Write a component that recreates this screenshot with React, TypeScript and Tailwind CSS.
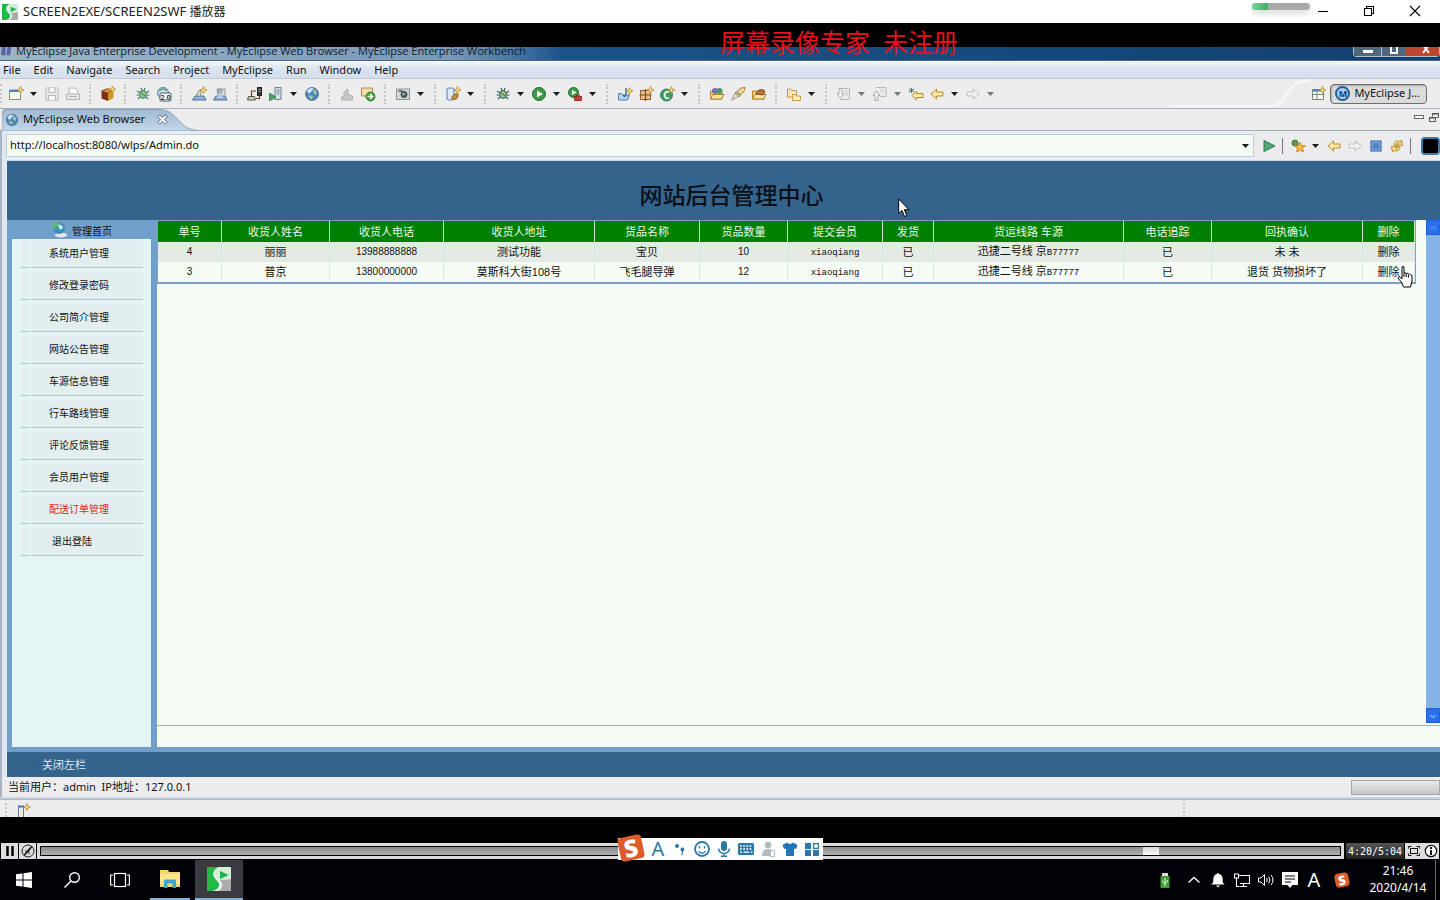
import React from "react";

type Kids = { children?: React.ReactNode };

function Svg({ children, s = 16, box = "0 0 16 16" }: Kids & { s?: number; box?: string }) {
  return (
    <svg width={s} height={s} viewBox={box} fill="none" aria-hidden="true" className="shrink-0">
      {children}
    </svg>
  );
}

const Spark = ({ x = 12, y = 4 }: { x?: number; y?: number }) => (
  <path
    transform={`translate(${x} ${y})`}
    d="M0-3.5 1-1 3.5 0 1 1 0 3.5-1 1-3.5 0-1-1Z"
    fill="#f7dc83"
    stroke="#b98a2a"
    strokeWidth=".8"
  />
);

const Globe = () => (
  <>
    <circle cx="8" cy="8" r="6.500" fill="#4d86bd" stroke="#42607f" strokeWidth=".7" />
    <path d="M3 5C5 1.500 9 1.500 9.500 3L7 6 5 8Z" fill="#cfe8f5" />
    <path d="M10 3l3 3-1 3-3-2ZM5 9l4 1-1 3.500-3-1.500Z" fill="#9fc9a6" />
  </>
);

const Bug = ({ c = "#3f7f86" }: { c?: string }) => (
  <>
    <path d="M2 5l3 2M1.500 9H5M3 13l3-3M14 5l-3 2M14.500 9H11M13 13l-3-3M6 2l1 3M10 2 9 5" stroke={c} strokeWidth="1.200" />
    <ellipse cx="8" cy="8.500" rx="3.400" ry="4" fill="#9cc66b" stroke={c} />
    <path d="M6 7l4 3" stroke={c} />
  </>
);

const LeftArrow = ({ c = "#b98a2a", f = "#fbe9a6" }: { c?: string; f?: string }) => (
  <path d="M2 8 7.500 3v3H14v4H7.500v3Z" fill={f} stroke={c} strokeLinejoin="round" />
);
const RightArrow = ({ c = "#bdbdbd", f = "#f4f4f4" }: { c?: string; f?: string }) => (
  <path d="M14 8 8.500 3v3H2v4h6.500v3Z" fill={f} stroke={c} strokeLinejoin="round" />
);

const Folder = ({ c = "#b5812e" }: { c?: string }) => (
  <>
    <path d="M1.500 13V5h4l1 1.500H13V13Z" fill="#f3cf7c" stroke={c} />
    <path d="M1.500 13 4 8.500h11L12.500 13Z" fill="#fbe4a4" stroke={c} />
  </>
);

const icons: Record<string, React.ReactNode> = {
  New: (
    <>
      <rect x="1.500" y="4" width="11" height="9.500" fill="#fffdf0" stroke="#8c8f75" />
      <path d="M1.500 5h10" stroke="#4d86bd" strokeWidth="2" />
      <Spark x={12.500} y={4} />
    </>
  ),
  Save: (
    <>
      <path d="M2 2h12v12H2Z" fill="#ececec" stroke="#b3b3b3" />
      <path d="M5 2v4.500h6V2M4.500 14V9.500h7V14" fill="#f8f8f8" stroke="#b3b3b3" />
    </>
  ),
  Print: (
    <>
      <path d="M4 8V2h6l3 2.500V8" fill="#f8f8f8" stroke="#b3b3b3" />
      <path d="M1.500 8h13v5.500h-13Z" fill="#e6e6e6" stroke="#b3b3b3" />
      <path d="M4 10.500h8" stroke="#b3b3b3" />
    </>
  ),
  Package: (
    <>
      <path d="M1.500 5l6-2.500L13.500 5l-5.500 2Z" fill="#d98f3a" stroke="#6d3a16" strokeWidth=".7" />
      <path d="M1.500 5 8 7v8l-6.500-2.500Z" fill="#7d2f1d" />
      <path d="M8 7l5.500-2v7L8 15Z" fill="#cf9a1c" />
      <Spark x={12.500} y={3.500} />
    </>
  ),
  "Web services": <Bug />,
  "Web 2.0": (
    <>
      <circle cx="7" cy="7" r="5.500" fill="#cfe2ee" stroke="#5b7f99" />
      <path d="M3 5c3-3 6-2 8 0" stroke="#5b9a7c" strokeWidth="1.500" />
      <rect x="4" y="7" width="11" height="8" rx="1" fill="#fff" stroke="#44566b" />
      <text x="9.500" y="13.500" fontSize="7" fontWeight="bold" textAnchor="middle" fill="#26384d">
        2.0
      </text>
    </>
  ),
  "New report": (
    <>
      <path d="M1.500 14 4 10h9l2 4Z" fill="#8fb4dc" stroke="#4f6f98" />
      <path d="M6 10c0-4 1-5 3-6l1 3-1 4Z" fill="#dcd6b4" stroke="#6e7d8f" strokeWidth=".8" />
      <Spark x={12.500} y={4} />
    </>
  ),
  "Open report": (
    <>
      <path d="M1.500 14 4 10h9l2 4Z" fill="#8fb4dc" stroke="#4f6f98" />
      <path d="M5 3h8v7H6Z" fill="#d7dcdf" stroke="#7c8892" strokeWidth=".8" />
      <circle cx="8" cy="5" r="2" fill="#b8c8a0" stroke="#6e7d8f" strokeWidth=".8" />
      <path d="M5 12c0-3 1-4 3-4s3 1 3 4" fill="#b4c9e0" />
    </>
  ),
  Deploy: (
    <>
      <rect x="10.500" y="1.500" width="4" height="8" fill="#333" stroke="#222" />
      <path d="M11.500 3.500h2M11.500 5.500h2" stroke="#bbb" />
      <path d="M1.500 10.500h6l1 3.500h-8Z" fill="#c6cfae" stroke="#555" />
      <path d="M4.500 10V5H9M12.500 10v2.500H9" stroke="#7a3a2a" strokeWidth="1.200" />
    </>
  ),
  Server: (
    <>
      <rect x="7" y="1.500" width="6" height="12" fill="#dbe3e8" stroke="#6f8291" />
      <path d="M8.500 4h3M8.500 6h3M8.500 8h3" stroke="#6f8291" />
      <path d="M1.500 7v8L8 11Z" fill="#48a35d" stroke="#2b7540" strokeWidth=".7" />
    </>
  ),
  Browser: <Globe />,
  Stamp: <path d="M2.500 14v-3l3-1-1-3 4-4 1 6 4 1v4Z" fill="#c7c7c7" stroke="#b0b0b0" />,
  Launch: (
    <>
      <path d="M1.500 2h11v8h-11Z" fill="#f4dfae" stroke="#b58a4a" />
      <circle cx="10.500" cy="10.500" r="4.500" fill="#3f9d3a" stroke="#2c7429" strokeWidth=".8" />
      <path d="M7.500 10.500h4M10 8l2.700 2.500L10 13" stroke="#fff" strokeWidth="1.500" />
    </>
  ),
  Capture: (
    <>
      <rect x="1.500" y="3" width="13" height="10.500" fill="#d4d8d8" stroke="#8e9696" />
      <path d="M3.500 5h4" stroke="#555" strokeWidth="1.500" />
      <circle cx="9" cy="8.500" r="3" fill="#59696f" stroke="#333f44" />
      <circle cx="8.500" cy="8" r="1" fill="#c5d8df" />
    </>
  ),
  "Database bean": (
    <>
      <path d="M2 3c2-1.500 5-1.500 7 0v10c-2 1.500-5 1.500-7 0Z" fill="#dbe9f8" stroke="#4f7fb6" />
      <path d="M7 13c-1-3 3-6 6-5 1 3-2 7-6 5Z" fill="#c98a3c" stroke="#7d4d1c" strokeWidth=".8" />
      <Spark x={12.500} y={4} />
    </>
  ),
  Debug: <Bug c="#355d70" />,
  Run: (
    <>
      <circle cx="8" cy="8" r="6.500" fill="#3b9a45" stroke="#256d2f" />
      <path d="M6 4.500v7L12 8Z" fill="#fff" />
    </>
  ),
  "External tools": (
    <>
      <circle cx="6.500" cy="6.500" r="5" fill="#3b9a45" stroke="#256d2f" />
      <path d="M5 4v5l4.500-2.500Z" fill="#fff" />
      <rect x="7.500" y="10.500" width="7" height="4" fill="#d43a33" stroke="#8f1e1a" strokeWidth=".8" />
      <path d="M9.500 10V9h3v1" stroke="#8f1e1a" />
    </>
  ),
  "New project": (
    <>
      <path d="M1.500 14V7.500h3l1 1.500h7l-2 5Z" fill="#b5d2ee" stroke="#4d7fb0" />
      <path d="M9 2v7c0 1.500-2.500 1.500-3 0" stroke="#3d69a0" strokeWidth="1.500" />
      <Spark x={12.500} y={5} />
    </>
  ),
  "New package": (
    <>
      <path d="M2.500 4.500h10v9h-10Z" fill="#e8bd87" stroke="#8f5e2c" />
      <path d="M7.500 3v12M1.500 9h12" stroke="#7e4a1e" strokeWidth="1.200" />
      <Spark x={12.500} y={4} />
    </>
  ),
  "New class": (
    <>
      <circle cx="7.500" cy="9" r="6" fill="#3c9a62" stroke="#26714a" strokeWidth=".8" />
      <text x="7.500" y="12.500" fontSize="10" fontWeight="bold" textAnchor="middle" fill="#fff">
        C
      </text>
      <Spark x={12.500} y={4} />
    </>
  ),
  "Open type": (
    <>
      <Folder />
      <circle cx="6" cy="5" r="3" fill="#7b6bb0" />
      <circle cx="10.500" cy="5" r="3" fill="#4a9a68" />
    </>
  ),
  Search: (
    <>
      <path d="M1.500 14 5 7l4 3-3 2Z" fill="#dedede" stroke="#9b9079" strokeWidth=".8" />
      <path d="M5 7 11 2l4-.5-.5 3L9 11Z" fill="#f2d695" stroke="#a8813d" />
      <path d="m7 6.500 3 2.500" stroke="#5c7fb0" strokeWidth="1.500" />
    </>
  ),
  "Open resource": (
    <>
      <Folder />
      <path d="M5 8c0-4 6-6 9-3l-2 4Z" fill="#b5713a" stroke="#7d461c" strokeWidth=".8" />
    </>
  ),
  Folders: (
    <>
      <path d="M1.500 11V3h3l1 1.500h5V11Z" fill="#f9e7ae" stroke="#c59a49" />
      <path d="M6.500 14.500V8.500h3l1 1.500h4v4.500Z" fill="#fbeec3" stroke="#c59a49" />
    </>
  ),
  "Next annotation": (
    <>
      <path d="M7 2.500h6.500v11H4" stroke="#b7b7b7" />
      <path d="M9 5h3M9 7h3M9 9h3" stroke="#c9c9c9" />
      <path d="M3 2.500h3v5h2L4.500 12 1 7.500h2Z" fill="#f3f3f3" stroke="#aaa" />
    </>
  ),
  "Previous annotation": (
    <>
      <path d="M4 1.500h10v9H8" stroke="#b7b7b7" />
      <path d="M8 4h4M9 6h3" stroke="#c9c9c9" />
      <path d="M3 14.500h3v-5h2L4.500 5 1 9.500h2Z" fill="#f3f3f3" stroke="#aaa" />
    </>
  ),
  "Last edit": (
    <>
      <path d="M4 9.500 8.500 5v2.500H15v4H8.500V14Z" fill="#fbe9a6" stroke="#b98a2a" strokeLinejoin="round" />
      <path d="M3.500 2v5M1 3l5 3M6 3 1 6" stroke="#3f7d5b" />
    </>
  ),
  Back: <LeftArrow />,
  Forward: <RightArrow />,
  Go: <path d="M3 2.500v11L14 8Z" fill="#56a874" stroke="#2f7b50" />,
  Favorites: (
    <>
      <circle cx="5" cy="5" r="3" fill="#5f9c4e" stroke="#3d6c3a" />
      <path d="m10 4 1.500 3.500 4 .3-3 2.400 1 3.800L10 12l-3.500 2 1-3.800-3-2.400 4-.3Z" fill="#f7b93f" stroke="#c17a1a" strokeWidth=".8" />
    </>
  ),
  Stop: (
    <>
      <rect x="3" y="3" width="10" height="10" fill="#7ea8dc" stroke="#2f5f9f" />
      <rect x="5" y="5" width="6" height="6" fill="#4f83c6" />
    </>
  ),
  Refresh: (
    <>
      <path d="M5 7c0-4 4-5 6-3l1.500-2 1 5.500-5.500-.5 1.500-1.500C8.500 4.500 7 5.500 7.500 8Z" fill="#f9df8d" stroke="#b98a2a" strokeLinejoin="round" />
      <path d="M11 9c0 4-4 5-6 3l-1.500 2-1-5.500L8 9l-1.500 1.500c1 1 2.500 0 2-2.500Z" fill="#f9df8d" stroke="#b98a2a" strokeLinejoin="round" />
    </>
  ),
};

const toolbar: string[] = [
  "New", "v", "Save", "Print", "|", "Package", "|", "Web services", "Web 2.0", "|", "New report", "Open report", "|",
  "Deploy", "Server", "v", "Browser", "|", "Stamp", "Launch", "|", "Capture", "v", "|", "Database bean", "v", "|",
  "Debug", "v", "Run", "v", "External tools", "v", "|", "New project", "New package", "New class", "v", "|",
  "Open type", "Search", "Open resource", "|", "Folders", "v", "|", "Next annotation", "x", "Previous annotation", "x",
  "Last edit", "Back", "v", "Forward", "x",
];

function Tool({ name }: { name: string }) {
  return (
    <button aria-label={name} className="flex w-[21px] shrink-0 items-center justify-center">
      <Svg>{icons[name]}</Svg>
    </button>
  );
}

function Caret({ dim = false }: { dim?: boolean }) {
  return (
    <button aria-label="More" className="flex w-[15px] shrink-0 items-center justify-center">
      <svg width="7" height="4" viewBox="0 0 7 4" aria-hidden="true">
        <path d="M0 0h7L3.500 4Z" fill={dim ? "#777" : "#1c1c1c"} />
      </svg>
    </button>
  );
}

const Sep = () => (
  <span className="flex w-[14px] shrink-0 justify-center">
    <span className="h-5 border-l-2 border-dotted border-[#c6c6c6]" />
  </span>
);

const columns: [string, string][] = [
  ["单号", "w-[64px]"],
  ["收货人姓名", "w-[108px]"],
  ["收货人电话", "w-[114px]"],
  ["收货人地址", "w-[151px]"],
  ["货品名称", "w-[105px]"],
  ["货品数量", "w-[88px]"],
  ["提交会员", "w-[95px]"],
  ["发货", "w-[51px]"],
  ["货运线路 车源", "w-[190px]"],
  ["电话追踪", "w-[88px]"],
  ["回执确认", "w-[151px]"],
  ["删除", "w-[52px]"],
];

const orders = [
  { id: "4", name: "丽丽", phone: "13988888888", address: "测试功能", goods: "宝贝", count: "10", receipt: "未 未" },
  { id: "3", name: "普京", phone: "13800000000", address: "莫斯科大街108号", goods: "飞毛腿导弹", count: "12", receipt: "退货 货物损坏了" },
];

const sideItems = [
  "系统用户管理", "修改登录密码", "公司简介管理", "网站公告管理", "车源信息管理",
  "行车路线管理", "评论反馈管理", "会员用户管理", "配送订单管理", "退出登陆",
];

function PlayerLogo({ s }: { s: number }) {
  return (
    <Svg s={s} box="0 0 24 24">
      <rect width="24" height="24" fill="#e9efe9" />
      <path d="M0 0h12C7 2 5 6 7 10c2 4 6 5 5 9-1 3-4 4-6 5H0Z" fill="#1fbb45" />
      <path d="M24 12v12H11c3-1 5-4 4-8-1-2-2-3-2-3Z" fill="#a9aeaa" />
      <path d="M12 0h12v12l-11 1C7 11 6 4 12 0Z" fill="#d4f0da" />
      <path d="M13 4v8l9-4Z" fill="#22b14c" />
    </Svg>
  );
}

function SogouLogo({ big = false }: { big?: boolean }) {
  return (
    <span
      className={
        big
          ? "flex size-6 -rotate-12 items-center justify-center rounded bg-[#dd5c2c] text-[24px] leading-6 font-black text-white"
          : "flex size-[14px] -rotate-12 items-center justify-center rounded-sm bg-[#dd5c2c] text-[13px] leading-[14px] font-black text-white"
      }
    >
      S
    </span>
  );
}

function TitleBar() {
  return (
    <header className="relative flex h-[23px] items-stretch bg-white text-[12px] text-[#222]">
      <div className="flex items-center gap-[5px] pl-[2px]">
        <PlayerLogo s={16} />
        <span>
          <span className="text-[13px]">SCREEN2EXE/SCREEN2SWF</span> 播放器
        </span>
      </div>
      <div className="ml-auto flex pr-[2px]">
        {[
          ["Minimize", "M3 8.500h10"],
          ["Restore", "M3.500 5.500h7v7h-7ZM5.500 5.500v-2h7v7h-2"],
          ["Close", "m3 3 10 10M13 3 3 13"],
        ].map(([label, d]) => (
          <button key={label} aria-label={label} className="flex w-[46px] items-center justify-center pb-[2px]">
            <Svg>
              <path d={d} stroke="#000" strokeWidth="1.100" />
            </Svg>
          </button>
        ))}
      </div>
      <div className="absolute top-[3px] right-[130px] h-[7px] w-[58px] overflow-hidden rounded-full bg-[#aaa] shadow-[0_4px_6px_#ddd]">
        <div className="h-full w-4 bg-gradient-to-r from-[#6fdc96] to-[#3fae68]" />
      </div>
    </header>
  );
}

function WorkbenchTitle() {
  return (
    <div className="flex h-[14px] items-start border-b border-[#4a6684] bg-gradient-to-r from-[#8ba6bf] via-[#18538a] via-[39%] to-[#12406f]">
      <div className="flex h-full w-[562px] items-start gap-1 bg-gradient-to-r from-[#9db6c6] via-[#7798b8] via-80% to-transparent pl-px">
        <Svg s={11} box="0 0 12 12">
          <path d="M1 0h4v9H0ZM7 0h4l-1 9H6Z" fill="#5a62a8" />
        </Svg>
        <span className="-mt-1 font-['Open_Sans','Noto_Sans',sans-serif] text-[11px] leading-4 whitespace-nowrap text-[#10202e]">
          MyEclipse Java Enterprise Development - MyEclipse Web Browser - MyEclipse Enterprise Workbench
        </span>
      </div>
      <div className="ml-auto flex h-[10px] rounded-b border border-t-0 border-[#b5c3cf]">
        <button aria-label="Minimize workbench" className="flex w-[27px] justify-center bg-[#51677c] pt-[3px]">
          <span className="h-[3px] w-[10px] bg-white" />
        </button>
        <button aria-label="Restore workbench" className="flex w-6 justify-center border-l border-[#b5c3cf] bg-[#51677c]">
          <span className="h-[7px] w-[8px] border-2 border-t-0 border-white" />
        </button>
        <button aria-label="Close workbench" className="flex w-[34px] justify-center bg-[#c0452f] pl-2">
          <Svg s={8} box="0 0 8 8">
            <path d="m1-2 6 8M7-2 1 6" stroke="#fff" strokeWidth="2" />
          </Svg>
        </button>
      </div>
    </div>
  );
}

function MenuBar() {
  const items = ["File", "Edit", "Navigate", "Search", "Project", "MyEclipse", "Run", "Window", "Help"];
  return (
    <nav className="flex h-[18px] items-center gap-[13px] border-b border-[#c3cbd8] bg-gradient-to-b from-[#f6f9fc] via-[#dde5f0] via-40% to-[#d5deec] px-[3px] pt-px text-[11px]">
      {items.map((m) => (
        <button key={m}>{m}</button>
      ))}
    </nav>
  );
}

function Toolbar() {
  return (
    <div className="flex h-[30px] items-stretch border-b border-[#a9b0bc] bg-[#ededed]">
      <span className="my-[5px] w-[5px] shrink-0 border-l-2 border-dotted border-[#c6c6c6]" />
      <div className="flex items-center">
        {toolbar.map((t, i) =>
          t === "|" ? <Sep key={i} /> : t === "v" ? <Caret key={i} /> : t === "x" ? <Caret key={i} dim /> : <Tool key={i} name={t} />
        )}
      </div>
      <svg width="140" height="29" viewBox="0 0 140 29" fill="none" className="ml-auto shrink-0" aria-hidden="true">
        <path d="M0 27.500h98C122 27 112 1.500 140 1.500" stroke="#fafafa" strokeWidth="2" />
      </svg>
      <div className="flex shrink-0 items-center gap-1 pr-[13px]">
        <button aria-label="Open perspective">
          <Svg>
            <path d="M2.500 3.500h11v10h-11ZM2.500 8.500h11M7 3.500v10" fill="#fff" stroke="#79856f" />
            <path d="M2.500 4.500h10" stroke="#4d86bd" strokeWidth="2" />
            <Spark x={12.500} y={4} />
          </Svg>
        </button>
        <button className="flex h-5 items-center gap-1 rounded-sm border border-[#6f6f6f] bg-[#dcdcdc] pr-[6px] pl-1 text-[11px] shadow-[inset_1px_1px_2px_#aaa]">
          <span className="flex size-[15px] items-center justify-center rounded-full border-2 border-[#1f5f9f] bg-[#a9cdea] text-[9px] leading-none font-bold text-[#123f70]">
            M
          </span>
          MyEclipse J...
        </button>
      </div>
    </div>
  );
}

function EditorTab() {
  return (
    <div className="relative flex h-[22px] items-center border-b border-[#a3acb8] bg-[#ededed] pl-[2px]">
      <svg width="200" height="22" viewBox="0 0 200 22" className="absolute top-0 left-[2px]" aria-hidden="true">
        <defs>
          <linearGradient id="tab" x1="0" y1="0" x2="0" y2="1">
            <stop offset="0" stopColor="#9fb9d3" />
            <stop offset="1" stopColor="#c3d7ea" />
          </linearGradient>
        </defs>
        <path d="M0 22V4Q0 .500 4 .500H158C176 .500 176 21.500 196 21.500V22Z" fill="url(#tab)" stroke="#8fa3b8" />
      </svg>
      <div className="relative flex items-center gap-1 pl-[3px] text-[11px]">
        <Svg s={14}>
          <Globe />
        </Svg>
        <span>MyEclipse Web Browser</span>
        <button aria-label="Close tab" className="ml-2">
          <Svg s={11} box="0 0 11 11">
            <path d="m1.500 1.500 8 8M9.500 1.500l-8 8" stroke="#5f6f80" strokeWidth="3.600" />
            <path d="m2 2 7 7M9 2 2 9" stroke="#fff" strokeWidth="2" />
          </Svg>
        </button>
      </div>
      <div className="ml-auto flex items-center gap-1 pb-1">
        <button aria-label="Minimize view">
          <Svg s={12} box="0 0 12 12">
            <rect x="1.500" y="3.500" width="9" height="3" fill="#fff" stroke="#666" />
          </Svg>
        </button>
        <button aria-label="Restore view">
          <Svg s={11} box="0 0 11 11">
            <path d="M3.500 4.500v-3h6v4h-2M3 2h7M.500 5.500h6v4h-6ZM0 6h7" stroke="#555" />
          </Svg>
        </button>
      </div>
    </div>
  );
}

function AddressRow() {
  return (
    <div className="flex h-[30px] items-center border-b border-[#c9d6e4] bg-[#e6edf5]">
      <div className="flex h-[23px] flex-1 items-center border border-[#c5cbd4] bg-[#f5fcf5]">
        <input
          aria-label="Address"
          defaultValue="http://localhost:8080/wlps/Admin.do"
          className="min-w-0 flex-1 bg-transparent pl-[3px] text-[11px] outline-none"
        />
        <Caret />
      </div>
      <div className="flex h-full items-center bg-[#ececee] pl-1">
        <Tool name="Go" />
        <span className="mr-1 ml-[3px] h-4 border-l border-[#777]" />
        <Tool name="Favorites" />
        <Caret />
        <Tool name="Back" />
        <Tool name="Forward" />
        <Tool name="Stop" />
        <Tool name="Refresh" />
        <span className="mr-[10px] ml-[3px] h-4 border-l border-[#777]" />
        <span className="h-[18px] w-[19px] rounded-sm border-2 border-[#3a78a8] bg-black" />
      </div>
    </div>
  );
}

function Sidebar() {
  return (
    <aside className="flex w-[150px] shrink-0 flex-col bg-[#719fcb] pr-[6px] pl-[5px]">
      <a href="#home" className="flex h-[19px] items-center gap-1 pl-[38px] text-[10px]">
        <Svg s={18} box="0 0 18 18">
          <ellipse cx="11" cy="14" rx="6" ry="2.500" fill="#e6e4f2" />
          <circle cx="9" cy="7" r="6" fill="#3f8fb5" />
          <path d="M2 5c1-4 6-5 8-3L7 6 4 8Z" fill="#63b56c" />
          <path d="M8 4c3-1 5 1 5 3l-3 2Z" fill="#c2ecf3" />
        </Svg>
        <span className="pt-1">管理首页</span>
      </a>
      <nav className="flex-1 bg-[#e3f5f5] pr-2 pl-[9px]">
        {sideItems.map((t, i) => (
          <a key={t} href={`#menu-${i}`} className="flex h-8 pt-px pb-[3px] text-[10px]">
            <span className="w-2 border-b border-[#b9c6c6] bg-[#e3eeee]" />
            <span
              className={
                "ml-[2px] flex flex-1 items-center border-b border-[#b9c6c6] bg-[#e3eeee] " +
                (i === 8 ? "pl-[18px] text-[#e01c1c]" : i === 9 ? "pl-[21px]" : "pl-[18px]")
              }
            >
              {t}
            </span>
          </a>
        ))}
      </nav>
    </aside>
  );
}

const latin = "font-['Liberation_Mono',monospace] text-[9px]";

function Orders() {
  const cell = "h-5 border-r border-[#dfe8e0] p-0 text-center whitespace-nowrap";
  return (
    <table className="w-full table-fixed border-separate border-spacing-0 border border-[#7f9fc6] border-b-2 text-[11px] leading-4">
      <thead>
        <tr className="bg-[#008000] text-[#e8f8e8]">
          {columns.map(([c, w]) => (
            <th key={c} className={"h-[21px] border-r border-[#cfe6cf] p-0 font-normal " + w}>
              {c}
            </th>
          ))}
        </tr>
      </thead>
      <tbody>
        {orders.map((o) => (
          <tr key={o.id} className="odd:bg-[#e4ebe4] even:bg-[#f5fcf5]">
            <td className={cell + " text-[10px]"}>{o.id}</td>
            <td className={cell}>{o.name}</td>
            <td className={cell + " text-[10px]"}>{o.phone}</td>
            <td className={cell}>{o.address}</td>
            <td className={cell}>{o.goods}</td>
            <td className={cell + " text-[10px]"}>{o.count}</td>
            <td className={cell}>
              <span className={latin}>xiaoqiang</span>
            </td>
            <td className={cell}>已</td>
            <td className={cell}>
              迅捷二号线 京<span className={latin}>B77777</span>
            </td>
            <td className={cell}>已</td>
            <td className={cell}>{o.receipt}</td>
            <td className={cell}>
              <a href={`#delete-${o.id}`}>删除</a>
            </td>
          </tr>
        ))}
      </tbody>
    </table>
  );
}

function Scrollbar() {
  const arrow = "flex h-[15px] items-center justify-center border border-[#1d5fd6] bg-[#2b72ea]";
  return (
    <div className="flex w-[14px] shrink-0 flex-col justify-between bg-[#86b3e6]">
      <button aria-label="Scroll up" className={arrow}>
        <Svg s={8} box="0 0 8 8">
          <path d="m1.500 5 2.500-2.500L6.500 5" stroke="#6fb0ff" />
        </Svg>
      </button>
      <button aria-label="Scroll down" className={arrow}>
        <Svg s={8} box="0 0 8 8">
          <path d="m1.500 3 2.500 2.500L6.500 3" stroke="#6fb0ff" strokeWidth="1.500" />
        </Svg>
      </button>
    </div>
  );
}

function Page() {
  return (
    <>
      <div className="flex h-[59px] items-center justify-center bg-[#34648c] pt-2 pl-4">
        <h1 className="text-[23px] leading-8 font-medium text-[#0a101a]">网站后台管理中心</h1>
      </div>
      <div className="flex flex-1 items-stretch">
        <Sidebar />
        <main className="flex min-w-0 flex-1 flex-col bg-[#f5fcf5] font-['Liberation_Sans','Noto_Sans_CJK_SC',sans-serif]">
          <div className="flex flex-1">
            <div className="min-w-0 flex-1 pr-3">
              <Orders />
            </div>
            <Scrollbar />
          </div>
          <div className="mt-[2px] h-[22px] border-t border-[#a8b0a8]" />
        </main>
      </div>
      <div className="h-[5px] bg-[#719fcb]" />
      <div className="flex h-[25px] items-center bg-[#34648c] pt-[2px] pl-6 text-[11px] text-[#dfeaf4]">
        <button className="flex items-center gap-1">
          <Svg s={7} box="0 0 7 7">
            <path d="m1 1 5 5M6 1 1 6" stroke="#8a3a4e" />
          </Svg>
          关闭左栏
        </button>
      </div>
    </>
  );
}

function Player() {
  const btn = "flex h-4 w-[17px] items-center justify-center bg-[#dedede]";
  return (
    <div className="flex h-[17px] items-center gap-px bg-black px-px pb-px">
      <button aria-label="Pause" className={btn}>
        <Svg s={12} box="0 0 12 12">
          <path d="M3.500 1v10M8.500 1v10" stroke="#000" strokeWidth="2.500" />
        </Svg>
      </button>
      <button aria-label="Mute" className={btn}>
        <Svg s={14} box="0 0 14 14">
          <circle cx="7" cy="7" r="6" stroke="#222" />
          <path d="M4 6h2l3-3v8L6 9H4Z" fill="#888" />
          <path d="M3 11.500 11 2.500" stroke="#111" strokeWidth="1.500" />
        </Svg>
      </button>
      <div className="flex h-4 flex-1 items-center bg-[#dcdcdc] px-[3px]">
        <input
          type="range"
          aria-label="Position"
          min={0}
          max={304}
          defaultValue={261}
          className="h-[10px] w-full appearance-none border border-black bg-gradient-to-b from-[#8a8a8a] to-[#b0b0b0] [&::-webkit-slider-thumb]:h-2 [&::-webkit-slider-thumb]:w-4 [&::-webkit-slider-thumb]:appearance-none [&::-webkit-slider-thumb]:bg-gradient-to-b [&::-webkit-slider-thumb]:from-[#d5d5d5] [&::-webkit-slider-thumb]:to-white"
        />
      </div>
      <span className="ml-px flex h-4 w-[58px] items-center justify-center bg-gradient-to-b from-[#555] to-[#222] font-['DejaVu_Sans_Mono',monospace] text-[10px] text-white">
        4:20/5:04
      </span>
      <div className="flex">
        <button aria-label="Full screen" className={btn}>
          <Svg s={14} box="0 0 14 14">
            <rect x="3.500" y="4.500" width="7" height="5" stroke="#111" />
            <path d="M1.500 4.500v-2h3M9.500 2.500h3v2M12.500 9.500v2h-3M4.500 11.500h-3v-2" stroke="#111" />
          </Svg>
        </button>
        <button aria-label="Info" className={btn}>
          <Svg s={14} box="0 0 14 14">
            <circle cx="7" cy="7" r="5.700" fill="#fff" stroke="#111" strokeWidth="1.200" />
            <path d="M7 3v2M7 6v5" stroke="#111" strokeWidth="2" />
          </Svg>
        </button>
      </div>
    </div>
  );
}

function ImeBar() {
  const b = "flex w-[22px] items-center justify-center";
  const c = "#2a78a8";
  return (
    <div className="absolute bottom-10 left-[618px] flex h-[22px] w-[205px] items-center bg-white">
      <span className="pb-[2px] pl-[1px]">
        <SogouLogo big />
      </span>
      <button aria-label="Input language" className={b + " ml-1 text-[20px] leading-5 text-[#2a78a8]"}>
        A
      </button>
      <button aria-label="Punctuation" className={b}>
        <Svg>
          <circle cx="5" cy="5" r="2" fill={c} />
          <path d="M8.500 8a2 2 0 1 1 2.200 2.500Q12 14 8.500 14.500 10.500 12.500 10 11 8.500 10.500 8.500 8Z" fill={c} />
        </Svg>
      </button>
      <button aria-label="Emoji" className={b}>
        <Svg>
          <circle cx="8" cy="8" r="7" stroke={c} strokeWidth="1.800" />
          <path d="M5.500 5v2.500M10.500 5v2.500M4.500 10c2 3 5 3 7 0" stroke={c} strokeWidth="1.300" />
        </Svg>
      </button>
      <button aria-label="Voice" className={b}>
        <Svg>
          <rect x="5" y="0" width="6" height="10" rx="3" fill={c} />
          <path d="M2.500 7.500a5.500 5 0 0 0 11 0M8 12.500V15M5 15.200h6" stroke={c} strokeWidth="1.500" />
        </Svg>
      </button>
      <button aria-label="Keyboard" className={b}>
        <Svg>
          <rect x="0" y="2" width="16" height="12" rx="1.500" fill={c} />
          <path d="M2 5h12M2 8h12" stroke="#fff" strokeWidth="1.300" strokeDasharray="1.800 1.400" />
          <path d="M2 11.200h2M5.500 11.200h5.500M12.500 11.200h2" stroke="#fff" strokeWidth="1.300" />
        </Svg>
      </button>
      <button aria-label="Account" className={b}>
        <Svg>
          <circle cx="8" cy="4" r="3.300" fill="#b3bcc2" />
          <path d="M2 15c0-5 2-7 6-7s5 1 5 3v4Z" fill="#b3bcc2" />
          <rect x="10.500" y="9.500" width="4" height="6" fill="#fff" stroke="#b3bcc2" />
        </Svg>
      </button>
      <button aria-label="Skin" className={b}>
        <Svg>
          <path d="M5 1.500c1 1.700 5 1.700 6 0l4.500 2.500-1.500 4-2-.500V15H4V7.500L2 8 .500 4Z" fill="#1f74bb" />
        </Svg>
      </button>
      <button aria-label="Toolbox" className={b}>
        <Svg>
          <path d="M1 2h6v6H1ZM1 9h6v6H1ZM9 9h6v6H9Z" fill={c} />
          <rect x="9.600" y="2.600" width="4.800" height="4.800" stroke={c} strokeWidth="1.300" />
        </Svg>
      </button>
    </div>
  );
}

function Taskbar() {
  const app = "flex w-12 items-center justify-center";
  const tray = "flex w-6 items-center justify-center";
  return (
    <footer className="flex h-10 items-stretch bg-[#010206] text-white">
      <button aria-label="Start" className={app}>
        <Svg>
          <path d="M0 2.300 6.500 1.400v6.100H0ZM7.500 1.200 16 0v7.500H7.500ZM0 8.500h6.500v6.100L0 13.700ZM7.500 8.500H16V16l-8.500-1.200Z" fill="#fff" />
        </Svg>
      </button>
      <button aria-label="Search Windows" className={app}>
        <Svg>
          <circle cx="10.500" cy="5.500" r="4.800" stroke="#fff" strokeWidth="1.400" />
          <path d="M7 9 .500 15.500" stroke="#fff" strokeWidth="1.500" />
        </Svg>
      </button>
      <button aria-label="Task view" className={app}>
        <Svg s={20} box="0 0 20 20">
          <rect x="4.500" y="3.500" width="11" height="13" stroke="#fff" strokeWidth="1.200" />
          <path d="M3 5H.600v10H3M17 5h2.400v10H17" stroke="#fff" strokeWidth="1.200" />
        </Svg>
      </button>
      <button aria-label="File Explorer" className={app + " ml-[2px]"}>
        <span className="flex h-full w-10 items-center justify-center border-b-2 border-[#7fb2dd]">
          <Svg s={22} box="0 0 22 22">
            <path d="M1 2h8l1 2h11v15H1Z" fill="#f6d568" />
            <path d="M1 6h20v10H1Z" fill="#fbe48e" />
            <path d="M5 20v-7q0-1.500 1.500-1.500h9Q17 11.500 17 13v7h-3.500v-4.500h-5V20Z" fill="#3aa7c9" />
          </Svg>
        </span>
      </button>
      <button aria-label="Player" className={app + " ml-px border-b-2 border-[#7fb2dd] bg-[#393b3e]"}>
        <PlayerLogo s={24} />
      </button>
      <div className="ml-auto flex items-stretch">
        <button aria-label="USB device" className={tray + " mr-[5px]"}>
          <Svg>
            <rect x="5" y="1" width="6" height="3" fill="#ddd" />
            <rect x="3.500" y="4" width="9" height="12" fill="#3f9f38" />
            <path d="M8 14V6M8 12 5.500 10V8.500M8 11l2.500-1.500V8" stroke="#e6ffe0" />
          </Svg>
        </button>
        <button aria-label="Show hidden icons" className={tray}>
          <Svg>
            <path d="m2.500 10.500 5.500-5 5.500 5" stroke="#fff" strokeWidth="1.300" />
          </Svg>
        </button>
        <button aria-label="Notifications" className={tray}>
          <Svg>
            <path d="M1 12.500c3-1.500 2-4 2.500-7C4 3 6 2 7 2q1-1.800 2 0c1 0 3 1 3.500 3.500.500 3-.500 5.500 2.500 7ZM6 13.500h4L8 15.500Z" fill="#fff" />
          </Svg>
        </button>
        <button aria-label="Network" className={tray}>
          <Svg>
            <path d="M4 3.500h11.500v8H6M9.500 11.500v3M6 14.500h7M.500 2h4v4h-4ZM2.500 6v8.500h3" stroke="#fff" strokeWidth="1.100" />
          </Svg>
        </button>
        <button aria-label="Volume" className={tray}>
          <Svg>
            <path d="M.500 6H3l3.500-3.500v11L3 10H.500Z" stroke="#fff" />
            <path d="M8.500 6q1.500 2 0 4M10.500 4.500q3 3.500 0 7M13 3q4 5 0 10" stroke="#fff" />
          </Svg>
        </button>
        <button aria-label="Action center" className={tray}>
          <Svg>
            <path d="M0 0h16v13h-5.500L8 16l-2.500-3H0Z" fill="#fff" />
            <path d="M3 4h10M3 7h10M3 10h6" stroke="#000" strokeWidth="1.200" />
          </Svg>
        </button>
        <button aria-label="Input mode" className={tray + " text-[20px] leading-5"}>
          A
        </button>
        <button aria-label="Sogou" className={tray + " ml-1"}>
          <SogouLogo />
        </button>
        <button className="ml-1 w-[76px] pb-[2px] pl-1 text-center text-[12px] leading-[17px]">
          21:46
          <br />
          2020/4/14
        </button>
        <span className="mr-1 ml-px border-l border-[#666]" />
      </div>
    </footer>
  );
}

export default function App() {
  return (
    <div className="relative flex min-h-screen flex-col overflow-hidden bg-black font-['Noto_Sans','Noto_Sans_CJK_SC',sans-serif] text-[#111]">
      <TitleBar />
      <div className="h-6" />
      <WorkbenchTitle />
      <MenuBar />
      <Toolbar />
      <EditorTab />
      <div className="flex flex-1 flex-col border-l-2 border-[#aab4c2] bg-[#ededef]">
        <div className="flex flex-1 flex-col border-l-4 border-[#dde8f3]">
          <AddressRow />
          <div className="flex flex-1 flex-col pl-px">
            <Page />
          </div>
        </div>
        <div className="flex h-5 items-center pl-[6px] text-[11px] whitespace-pre">
          <span>当前用户：admin  IP地址：127.0.0.1</span>
          <span className="ml-auto h-[15px] w-[89px] border border-[#a5a8a5] bg-gradient-to-b from-[#e9ebe9] to-[#c3c8c8]" />
        </div>
      </div>
      <div className="h-[3px] border-b border-[#a9b4c4] bg-[#c8d3e0]" />
      <div className="flex h-[17px] items-stretch bg-[#ededed] pt-[3px] pl-[5px]">
        <span className="border-l-2 border-dotted border-[#c6c6c6]" />
        <button aria-label="Show view" className="ml-[10px] self-start">
          <Svg s={14} box="0 0 14 14">
            <path d="M1.500 3v11M1.500 3.500h5V14" stroke="#667b94" />
            <path d="M1 3.500h6" stroke="#3f74b5" strokeWidth="2" />
            <Spark x={10} y={4} />
          </Svg>
        </button>
        <span className="mr-[255px] ml-auto border-l-2 border-dotted border-[#c6c6c6]" />
      </div>
      <div className="h-[26px]" />
      <Player />
      <Taskbar />

      <p className="absolute top-[26px] left-[720px] text-[25px] leading-8 whitespace-pre text-[#e8101c]">屏幕录像专家  未注册</p>
      <ImeBar />
      <svg width="12" height="20" viewBox="0 0 12 20" className="absolute top-[198px] left-[898px]" aria-hidden="true">
        <path d="M.700 1v14.500l3.300-3 2.500 6 2.300-1-2.500-5.800H11Z" fill="#fff" stroke="#000" />
      </svg>
      <svg width="16" height="23" viewBox="0 0 16 23" className="absolute top-[265px] left-[1397px]" aria-hidden="true">
        <path
          d="M5 12V2q1-1.500 2 0v6q1.200-1 2 .500 1.300-1 2.200.500 1.300-.500 2.200.700 1.500 0 1.600 1.300v5L13.500 22h-7L5 18 1 13q.500-2 2-1.200L5 14Z"
          fill="#fff"
          stroke="#000"
        />
        <path d="M7 8v4M9.200 9v3M11.500 10v2.500" stroke="#000" />
      </svg>
    </div>
  );
}
